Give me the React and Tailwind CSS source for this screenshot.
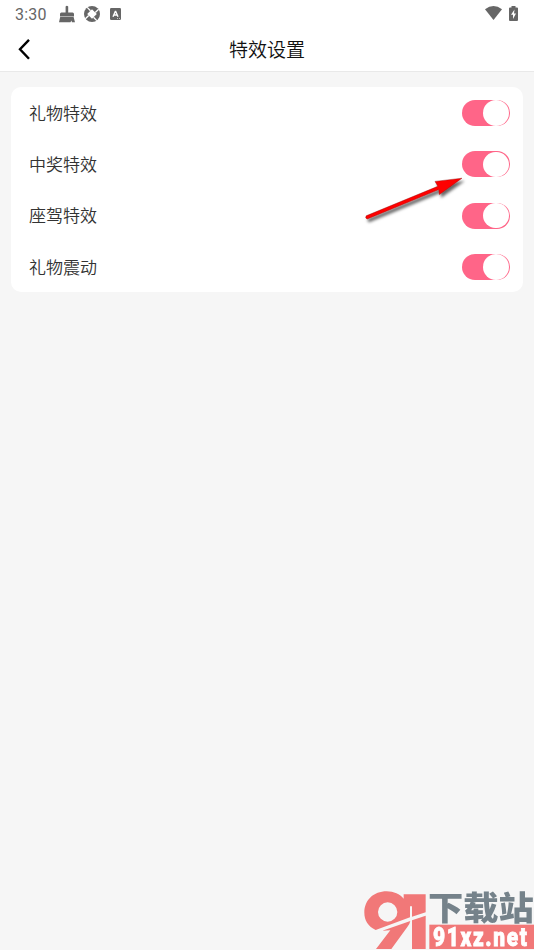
import React, { useState } from 'react';

const initialSettings = [
  { id: 'gift', label: '礼物特效', enabled: true },
  { id: 'prize', label: '中奖特效', enabled: true },
  { id: 'ride', label: '座驾特效', enabled: true },
  { id: 'shake', label: '礼物震动', enabled: true },
];

const StatusBar = () => (
  <div className="flex h-7 items-center pl-[15px] pr-4 text-[#666666]">
    <span className="w-11 pt-[1px] font-[Roboto,sans-serif] text-[16px] tracking-[0.2px] leading-7">3:30</span>

    {/* Cleaner */}
    <svg className="h-[18px] w-4" viewBox="0 0 16 18" fill="currentColor">
      <path d="M6.6 1.4Q7.9 0 9.2 1.4V7.5H13.6Q15 7.5 15 9V11.6H1V9Q1 7.5 2.4 7.5H6.6Z" />
      <path d="M1.2 12.1H14.6L16 17.2H12.9L12.4 15.6L11.5 17.2H0Z" />
    </svg>

    {/* Shutter */}
    <svg className="ml-[9px] h-4 w-4" viewBox="0 0 16 16" fill="none">
      <circle cx="8" cy="8" r="8" fill="currentColor" />
      <path d="M8 3.2L12.8 8L8 12.8L3.2 8Z" fill="white" />
      <path d="M6.5 4.7L3.2 1.4M11.3 6.5L14.6 3.2M9.5 11.3L12.8 14.6M4.7 9.5L1.4 12.8" stroke="white" strokeWidth="1.3" />
    </svg>

    {/* Input language */}
    <svg className="ml-[10px] h-3 w-[11px]" viewBox="0 0 11 12">
      <rect width="11" height="12" rx="1.2" fill="currentColor" />
      <path d="M3 8.7L5.3 3.5H5.7L8 8.7M4 7H7" stroke="white" strokeWidth="1.4" fill="none" />
      <path d="M7 10.5H8M9 10.5H10" stroke="white" strokeWidth="0.6" />
    </svg>

    <svg className="ml-auto mb-[2px] h-[14px] w-[17px]" viewBox="0 0 17 14" fill="currentColor">
      <path d="M0 3.2Q8.5-3.2 17 3.2L8.5 14Z" />
    </svg>
    <svg className="ml-[7px] mb-[2px] h-[15px] w-[9px]" viewBox="0 0 9 15">
      <path d="M2.5 0H6.5V1.5H8Q9 1.5 9 2.5V14Q9 15 8 15H1Q0 15 0 14V2.5Q0 1.5 1 1.5H2.5Z" fill="currentColor" />
      <path d="M5.5 3.5L2 8.8H4V13L7 7.5H5Z" fill="white" />
    </svg>
  </div>
);

const Toggle = ({ checked, label, onChange }) => (
  <button
    type="button"
    role="switch"
    aria-checked={checked}
    aria-label={label}
    onClick={onChange}
    className={`flex h-[26px] w-12 items-center rounded-full px-[1.5px] ${
      checked ? 'justify-end bg-[#ff6588]' : 'justify-start bg-gray-300'
    }`}
  >
    <span className="h-[25.5px] w-[25.5px] rounded-full bg-white" />
  </button>
);

const Pointer = () => (
  <svg className="absolute left-[360px] top-[172px] h-[56px] w-[112px] pointer-events-none" viewBox="0 0 112 56">
    <defs>
      <filter id="pointer-shadow" x="-20%" y="-30%" width="150%" height="180%">
        <feDropShadow dx="2" dy="3" stdDeviation="1.8" floodColor="#000000" floodOpacity="0.6" />
      </filter>
    </defs>
    <g filter="url(#pointer-shadow)" fill="#fe0000" stroke="#8c1010" strokeWidth="0.4">
      <path d="M6.2 43.8L77.8 14.3L75 9.4L102 6.2L79.3 22.6L78.8 17.6L7.3 47Q4.8 46.6 6.2 43.8Z" />
    </g>
  </svg>
);

const Watermark = () => (
  <div className="absolute left-[354px] top-[880px] h-[70px] w-[180px]">
    <svg className="absolute inset-0 h-full w-full" viewBox="0 0 540 210">
      <g fill="#f17878">
        <path fillRule="evenodd" d="M65 150C43 139 31 121 31 98C31 60 59 34 98 34C119 34 138 43 149 56V43H215V97L174 110V79H168V112ZM101 67A29 29 0 1 0 101 125A29 29 0 1 0 101 67Z" />
        <path d="M85 152L169 123Q168 130 160 141L112 207H66L109 151Z" />
        <path d="M174 121L215 107V207H174Z" />
        <rect x="226" y="134" width="314" height="73" />
      </g>
    </svg>
    <span className="absolute left-[74px] top-[11px] origin-top scale-y-[0.93] whitespace-nowrap font-['Noto_Sans_CJK_SC',sans-serif] text-[35.3px] font-black leading-[31px] text-[#75828a]">
      下载站
    </span>
    <span className="absolute left-[79px] top-[45px] origin-left scale-x-[0.82] whitespace-nowrap font-[Roboto,sans-serif] text-[25.5px] font-black leading-[24px] tracking-[2px] text-white [-webkit-text-stroke:0.8px_white]">
      91xz.net
    </span>
  </div>
);

const App = () => {
  const [settings, setSettings] = useState(initialSettings);

  const toggleSetting = (id) => {
    setSettings((prev) =>
      prev.map((item) => (item.id === id ? { ...item, enabled: !item.enabled } : item))
    );
  };

  return (
    <div className="relative h-[950px] w-[534px] bg-[#f6f6f6] font-['Noto_Sans_CJK_SC',sans-serif]">
      <header className="h-[72.4px] border-b border-[#e9e9e9] bg-white">
        <StatusBar />
        <div className="grid h-[42px] grid-cols-[54px_1fr_54px] items-center">
          <button type="button" aria-label="返回" className="pl-[18px]">
            <svg className="h-[22px] w-3" viewBox="0 0 12 22" fill="none">
              <path d="M11 1.8L2 11.2L11 20.8" stroke="black" strokeWidth="2.4" />
            </svg>
          </button>
          <h1 className="text-center text-[19px] font-[350] leading-[42px] text-[#111111]">特效设置</h1>
        </div>
      </header>

      <main className="px-[11px] pt-[15px]">
        <div className="rounded-[10px] bg-white pl-[18px] pr-[13px]">
          {settings.map((item) => (
            <div key={item.id} className="flex h-[51.25px] items-center justify-between">
              <span className="-mt-[1px] text-[17px] font-[350] text-[#333333]">{item.label}</span>
              <Toggle
                checked={item.enabled}
                label={item.label}
                onChange={() => toggleSetting(item.id)}
              />
            </div>
          ))}
        </div>
      </main>

      <Pointer />
      <Watermark />
    </div>
  );
};

export default App;
